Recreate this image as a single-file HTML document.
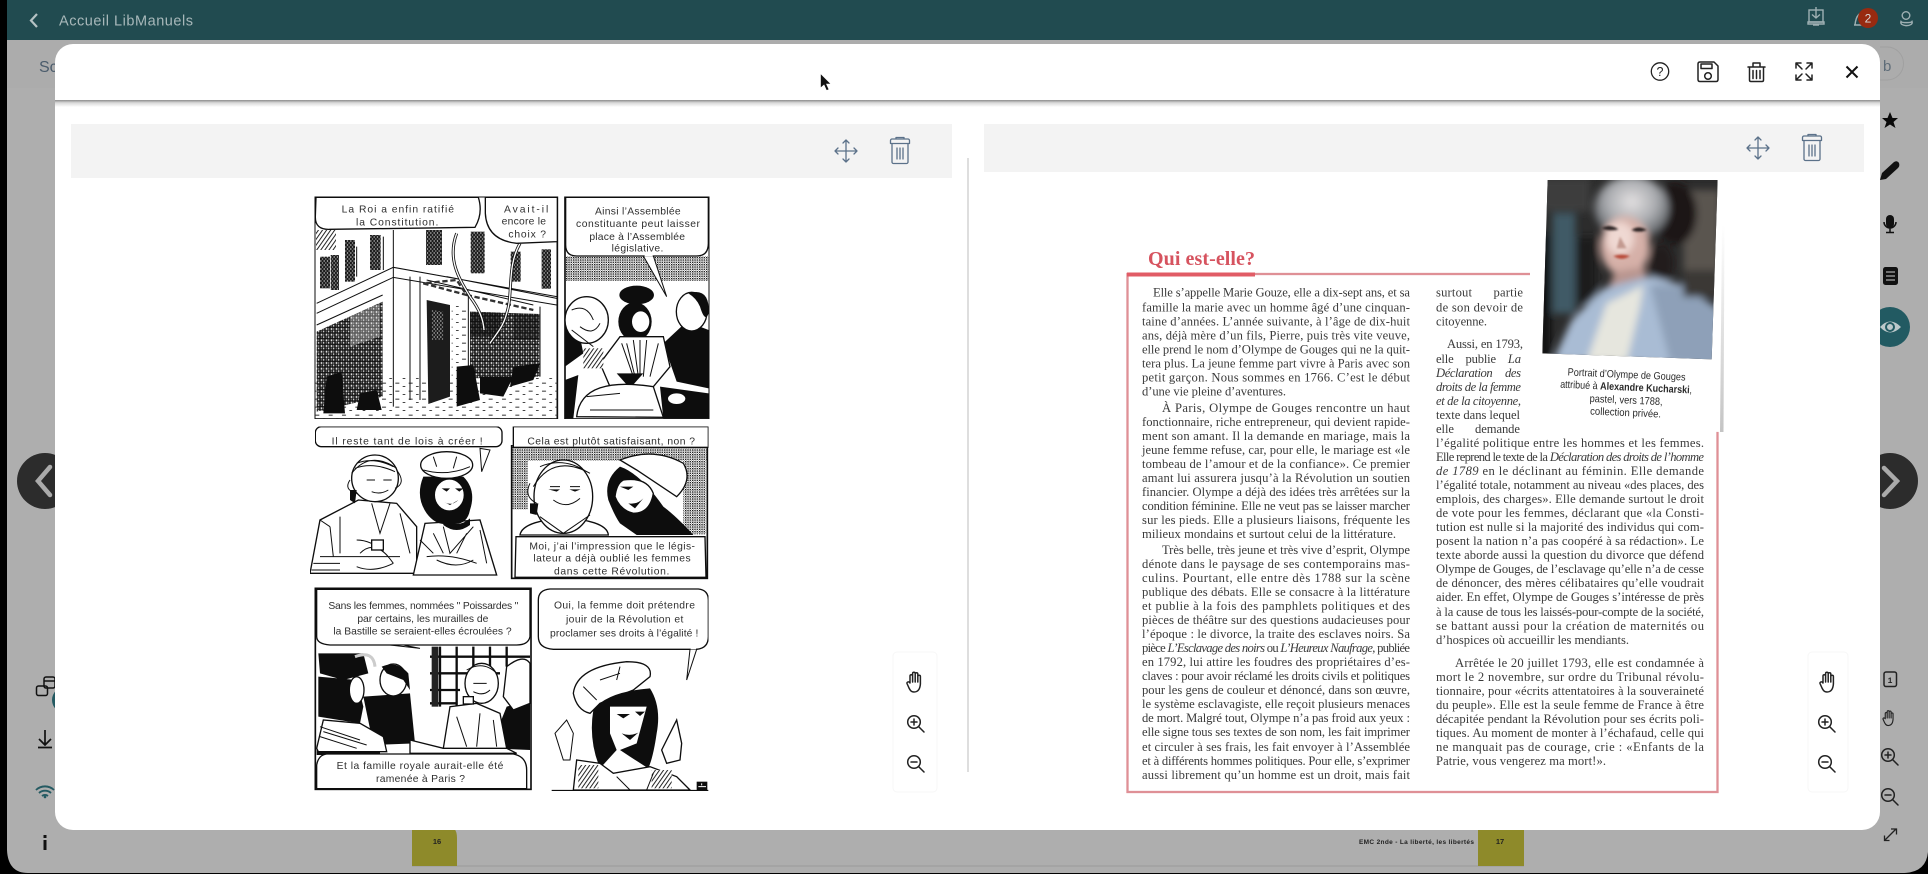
<!DOCTYPE html>
<html lang="fr"><head><meta charset="utf-8"><title>Accueil LibManuels</title>
<style>
html,body{margin:0;padding:0;background:#000;width:1928px;height:874px;overflow:hidden}
svg{display:block}
.c text{font-family:"Liberation Sans",sans-serif;font-size:31px;fill:#2e2e2e}
.p text{font-family:"Liberation Serif",serif;font-size:12.600px;fill:#3a3a3a}
.ic{fill:none;stroke:#222;stroke-width:1.5;stroke-linecap:round;stroke-linejoin:round}
.bl{fill:none;stroke:#5b7189;stroke-width:1.3;stroke-linecap:round;stroke-linejoin:round}
.k{fill:#111}
.o{fill:#fff;stroke:#111;stroke-width:4}
.l{fill:none;stroke:#111;stroke-width:3}
</style></head><body>
<svg width="1928" height="874" viewBox="0 0 1928 874" xmlns="http://www.w3.org/2000/svg">
<defs>
<filter id="bl" x="-20%" y="-20%" width="140%" height="140%"><feGaussianBlur stdDeviation="11"/></filter>
<filter id="b2" x="-5%" y="-5%" width="110%" height="110%"><feGaussianBlur stdDeviation="3"/></filter>
<filter id="cb" x="0" y="0" width="100%" height="100%"><feGaussianBlur stdDeviation="1.100"/></filter>
<clipPath id="pc"><polygon points="353,30 863,30 845,568 337,550"/></clipPath>
<pattern id="g" width="15" height="17" patternUnits="userSpaceOnUse"><rect width="15" height="17" fill="#111"/><rect x="2" y="2" width="5" height="6" fill="#ddd"/><rect x="9" y="2" width="4" height="6" fill="#777"/><rect x="2" y="10" width="5" height="5" fill="#666"/><rect x="9" y="10" width="4" height="5" fill="#ccc"/></pattern>
<pattern id="w" width="10" height="12" patternUnits="userSpaceOnUse"><rect width="10" height="12" fill="#1c1c1c"/><rect x="1" y="1" width="3" height="4" fill="#eee"/><rect x="6" y="7" width="3" height="4" fill="#bbb"/></pattern>
<pattern id="t" width="7" height="7" patternUnits="userSpaceOnUse"><rect width="7" height="7" fill="#fff"/><rect width="4" height="4" fill="#111"/><rect x="4" y="4" width="2" height="2" fill="#222"/></pattern>
<pattern id="h" width="10" height="10" patternUnits="userSpaceOnUse" patternTransform="rotate(35)"><rect width="10" height="10" fill="#fff"/><rect width="3" height="10" fill="#222"/></pattern>
<pattern id="d" width="40" height="24" patternUnits="userSpaceOnUse"><rect x="6" y="8" width="12" height="3" fill="#333"/><rect x="28" y="18" width="8" height="3" fill="#444"/></pattern>
<linearGradient id="sh" x1="0" y1="0" x2="0" y2="1"><stop offset="0" stop-color="#8c8c8c"/><stop offset=".4" stop-color="#d8d8d8"/><stop offset="1" stop-color="#fff"/></linearGradient>
<linearGradient id="ps" x1="0" y1="0" x2="0" y2="1"><stop offset="0" stop-color="#fff"/><stop offset="1" stop-color="#c4c4c4"/></linearGradient>
<radialGradient id="hr" cx=".5" cy=".4" r=".6"><stop offset="0" stop-color="#e4e1e2"/><stop offset=".55" stop-color="#aaacb0"/><stop offset="1" stop-color="#55595d"/></radialGradient>
<g id="hand"><path class="ic" stroke="#444" stroke-width="1.100" d="M-5 1V-6a1.3 1.3 0 0 1 2.6 0V-8.5a1.3 1.3 0 0 1 2.6 0V-8a1.3 1.3 0 0 1 2.6 0V-5.5a1.3 1.3 0 0 1 2.6 0V2C5 7 3 10-1 10C-4 10-5 8-6 6L-8 1.5C-8.5 0-6-1-5 1ZM-2.4-6V0M.2-8V0M2.8-5.5V0"/></g>
<g id="zp"><circle class="ic" cx="-2" cy="-2" r="6.3" stroke-width="1.8" stroke="#111"/><path class="ic" stroke-width="1.7" d="M3 3L8 8M-5-2H1M-2-5V1"/></g>
<g id="zm"><circle class="ic" cx="-2" cy="-2" r="6.3" stroke-width="1.8"/><path class="ic" stroke-width="1.7" d="M3 3L8 8M-5-2H1"/></g>
<g id="mv"><path class="bl" d="M0-11V11M-11 0H11M-3-8L0-11L3-8M-3 8L0 11L3 8M-8-3L-11 0L-8 3M8-3L11 0L8 3"/></g>
<g id="tr"><path class="bl" d="M-8-7.5V11a1.5 1.5 0 0 0 1.5 1.5H6.5A1.5 1.5 0 0 0 8 11V-7.5M-9.5-7.5H9.5V-10.500a1.500 1.500 0 0 0-1.500-1.500H-8A1.500 1.500 0 0 0-9.500-10.500ZM-4-12V-13.500H4V-12M-3-3V8M0-3V8M3-3V8"/></g>
</defs>

<!-- backdrop -->
<rect width="1928" height="874" fill="#000"/>
<path d="M7 0H1928V852Q1926 874 1900 873H28Q8 873 7 850Z" fill="#aeaeae"/>
<rect x="7" y="40" width="1921" height="48" fill="#acacac"/>
<rect x="7" y="0" width="1921" height="40" fill="#214b50"/>
<path d="M37 14L31 20.500L37 27" fill="none" stroke="#b5c2c4" stroke-width="2.200"/>
<text x="59" y="25.500" font-family="Liberation Sans,sans-serif" font-size="14.500" fill="#a8b8ba" textLength="134">Accueil LibManuels</text>
<text x="39" y="72" font-family="Liberation Sans,sans-serif" font-size="16" fill="#4b5c6c">Sc</text>
<path d="M1880 47H1887a16.500 16.500 0 0 1 0 33H1880" fill="none" stroke="#a0a0a0"/>
<text x="1883" y="71" font-family="Liberation Sans,sans-serif" font-size="15" fill="#5e6c78">b</text>
<!-- top right -->
<g fill="none" stroke="#9fb0b3" stroke-width="1.400"><rect x="1809" y="10" width="14" height="12"/><path d="M1816 7V18M1812 14.500L1816 18L1820 14.500"/><path d="M1808 22H1824V24H1808ZM1813 25H1819"/><path d="M1855 25C1856 15 1860 12 1864 14M1854 25H1866"/><circle cx="1906" cy="15.500" r="3.800"/><path d="M1901 21.500C1899 27 1914 27 1912 21.500C1911 23 1902 23 1901 21.500Z"/></g>
<circle cx="1868" cy="18" r="10" fill="#982a10"/>
<text x="1868" y="22.500" text-anchor="middle" font-family="Liberation Sans,sans-serif" font-size="12" fill="#d8d8d8">2</text>
<!-- left tools -->
<g fill="none" stroke="#111" stroke-width="1.500"><rect x="44" y="677" width="11" height="11" rx="2"/><path d="M44 681H55"/><rect x="36.500" y="686" width="11" height="9.500" rx="2"/></g>
<circle cx="65" cy="700" r="13" fill="#245a62"/>
<path d="M45 730V745M39 739L45 745L51 739M38 747.500H52" fill="none" stroke="#111" stroke-width="1.700"/>
<g fill="none" stroke="#245a62" stroke-width="1.900"><path d="M36 790A13 13 0 0 1 54 790"/><path d="M39 793A9 9 0 0 1 51 793"/><path d="M42 796A5 5 0 0 1 48 796"/></g><circle cx="45" cy="797" r="1.300" fill="#245a62"/>
<rect x="43.500" y="840" width="3" height="10" fill="#111"/><rect x="43.500" y="835" width="3" height="3" fill="#111"/>
<circle cx="45" cy="481" r="28" fill="#2c2c2c"/>
<path d="M50 467L38 481L50 495" fill="none" stroke="#aaa" stroke-width="4.500" stroke-linecap="round"/>
<!-- right tools -->
<path d="M1892 112L1894.500 118H1900L1895.500 122L1897.500 128L1892 124.500L1886.500 128L1888.500 122L1884 118H1889.500Z" fill="#0a0a0a" transform="translate(-2 0)"/>
<path d="M1880 180L1882 173L1894 162Q1897 160 1899 163Q1900 166 1898 168L1886 179Z" fill="#111"/>
<rect x="1886" y="215" width="8" height="13" rx="4" fill="#111"/><path d="M1884 222A6 6 0 0 0 1896 222M1890 228V232M1886 232.500H1894" fill="none" stroke="#111" stroke-width="1.500"/>
<rect x="1883" y="267" width="15" height="18" rx="2.500" fill="#111"/><path d="M1886 272H1895M1886 276H1895M1886 280H1895" stroke="#aaa" stroke-width="1.200"/>
<circle cx="1890" cy="327" r="20" fill="#225a62"/>
<path d="M1880 327Q1890 316 1901 327Q1890 338 1880 327Z" fill="#bcc8ca"/><circle cx="1890" cy="327" r="4" fill="none" stroke="#225a62" stroke-width="2"/>
<circle cx="1890" cy="481" r="28" fill="#2c2c2c"/>
<path d="M1884 468L1897 481L1884 495" fill="none" stroke="#aaa" stroke-width="4.500" stroke-linecap="round"/>
<rect x="1884" y="672" width="12.500" height="14.500" rx="2" fill="none" stroke="#222" stroke-width="1.500"/>
<text x="1890" y="683" text-anchor="middle" font-family="Liberation Mono,monospace" font-size="8" font-weight="bold" fill="#222">1</text>
<use href="#hand" transform="translate(1889 718) scale(.75)"/>
<use href="#zp" transform="translate(1890 757)"/>
<use href="#zm" transform="translate(1890 797)"/>
<path d="M1885 840L1896 829M1891 829H1896.500V834.500M1884.500 835.500V840.500H1889.500" fill="none" stroke="#222" stroke-width="1.300"/>
<!-- page tabs -->
<rect x="412" y="865" width="1112" height="2" fill="#a4a4a4"/>
<path d="M412 825H445Q457 825 457 838V866H412Z" fill="#8e8a2a"/>
<text x="437" y="844" text-anchor="middle" font-family="Liberation Sans,sans-serif" font-size="7.500" font-weight="bold" fill="#222">16</text>
<path d="M1478 825H1524V866H1478Z" fill="#8e8a2a"/>
<text x="1500" y="844" text-anchor="middle" font-family="Liberation Sans,sans-serif" font-size="7.500" font-weight="bold" fill="#222">17</text>
<text x="1359" y="844" font-family="Liberation Sans,sans-serif" font-size="6.500" font-weight="bold" fill="#222" textLength="115">EMC 2nde - La liberté, les libertés</text>

<!-- modal -->
<rect x="55" y="44" width="1825" height="786" rx="18" fill="#fff"/>
<rect x="55" y="100" width="1825" height="7" fill="url(#sh)"/>
<circle cx="1660" cy="71.500" r="8.700" fill="none" stroke="#222" stroke-width="1.300"/>
<text x="1660" y="76" text-anchor="middle" font-family="Liberation Sans,sans-serif" font-size="12.500" fill="#222">?</text>
<g class="ic" stroke="#222"><path d="M1700 62H1714L1718 66V79.500Q1718 81.500 1716 81.500H1700Q1698 81.500 1698 79.500V64Q1698 62 1700 62Z"/><rect x="1701" y="64" width="11" height="4.500"/><circle cx="1708" cy="76" r="3.300"/></g>
<g class="ic" stroke="#222"><path d="M1748 67H1765M1753 67V63H1760V67M1749.500 67V80Q1749.500 81.500 1751 81.500H1762Q1763.500 81.500 1763.500 80V67M1753 70.500V78.500M1756.500 70.500V78.500M1760 70.500V78.500"/></g>
<g class="ic" stroke="#111" stroke-width="1.500"><path d="M1796 63L1802 69M1796 68V63H1801M1812 63L1806 69M1807 63H1812V68M1796 80L1802 74M1796 75V80H1801M1812 80L1806 74M1807 80H1812V75"/></g>
<path d="M1846.500 66.500L1857.500 77.500M1857.500 66.500L1846.500 77.500" stroke="#111" stroke-width="2" fill="none"/>

<rect x="71" y="124" width="881" height="54" fill="#f3f3f3"/>
<rect x="984" y="124" width="880" height="48" fill="#f3f3f3"/>
<rect x="967.500" y="158" width="1" height="614" fill="#bdbdbd"/>
<use href="#mv" transform="translate(846 151)"/><use href="#tr" transform="translate(900 151)"/>
<use href="#mv" transform="translate(1758 148)"/><use href="#tr" transform="translate(1812 148)"/>
<rect x="1808" y="652" width="40" height="140" rx="4" fill="none" stroke="#f7f7f7"/>
<rect x="893" y="652" width="44" height="140" rx="4" fill="none" stroke="#f7f7f7"/>
<use href="#hand" transform="translate(1828 682)"/><use href="#zp" transform="translate(1827 724)"/><use href="#zm" transform="translate(1827 764)"/>
<use href="#hand" transform="translate(915 682)"/><use href="#zp" transform="translate(916 724)"/><use href="#zm" transform="translate(916 764)"/>

<!-- comic page -->
<g filter="url(#cb)" transform="translate(300 180) scale(.33333)" class="c">
<!-- panel 1 -->
<rect x="44" y="50" width="728" height="667" fill="#fff" stroke="#111" stroke-width="5"/>
<rect x="44" y="590" width="728" height="125" fill="url(#d)"/>
<rect x="48" y="150" width="60" height="60" fill="url(#h)"/>
<path class="k" d="M48 640L100 600L130 700H48Z" opacity=".0"/>
<g fill="url(#w)"><rect x="60" y="230" width="30" height="95"/><rect x="92" y="225" width="25" height="105"/><rect x="135" y="180" width="30" height="125"/><rect x="210" y="165" width="32" height="105"/><rect x="378" y="150" width="48" height="105"/><rect x="512" y="155" width="42" height="125"/><rect x="632" y="215" width="30" height="90"/><rect x="725" y="208" width="28" height="118"/></g>
<path class="l" d="M50 370L280 262L770 350M50 400L280 292L770 375M50 435L248 345M280 150V680M330 290V660M360 290V660M505 345V590M720 380V590M170 200L170 290M250 170V270M440 290L770 355M380 300L700 375"/>
<path d="M370 310L500 345L470 300ZM500 345L700 390" fill="none" stroke="#333" stroke-width="7" stroke-dasharray="16 8"/>
<polygon points="50,455 248,365 248,650 50,695" fill="url(#g)"/>
<polygon points="150,410 240,370 240,470 150,500" fill="#ddd" opacity=".35"/>
<polygon points="380,360 450,375 450,650 385,672" fill="#1c1c1c"/><polygon points="395,390 430,395 430,480 395,480" fill="url(#w)"/>
<rect x="455" y="375" width="45" height="260" fill="url(#d)"/>
<polygon points="510,395 718,402 718,590 510,595" fill="url(#g)"/>
<polygon points="510,395 600,398 600,470 510,470" fill="#111" opacity=".65"/>
<polygon points="640,400 718,402 718,480 640,480" fill="#111" opacity=".5"/>
<path class="k" d="M80 590L125 575L135 700L70 700ZM180 640L230 630L245 690L170 690ZM470 560L520 555L540 660L470 680ZM540 590H640L610 650L540 640ZM640 560L720 550L700 600L630 620Z"/>
<path d="M470 160C440 240 480 300 510 350C540 390 550 420 552 450" fill="none" stroke="#111" stroke-width="9"/><path d="M470 160C440 240 480 300 510 350C540 390 550 420 552 450" fill="none" stroke="#fff" stroke-width="4"/>
<path d="M660 190C620 260 640 340 620 400C610 440 590 460 570 490" fill="none" stroke="#111" stroke-width="9"/><path d="M660 190C620 260 640 340 620 400C610 440 590 460 570 490" fill="none" stroke="#fff" stroke-width="4"/>
<path class="o" d="M48 52H535Q550 100 525 142L90 148Q45 150 46 110Z"/>
<path class="o" d="M556 52H772V185L650 190Q560 180 556 100Z"/>
<text x="125" y="97" textLength="337">La Roi a enfin ratifié</text><text x="168" y="137" textLength="247">la Constitution.</text>
<text x="612" y="97" textLength="133">Avait-il</text><text x="605" y="133" textLength="133">encore le</text><text x="625" y="172" textLength="113">choix ?</text>
<!-- panel 2 -->
<rect x="795" y="50" width="433" height="667" fill="#fff" stroke="#111" stroke-width="5"/>
<rect x="798" y="228" width="428" height="75" fill="url(#t)"/>
<path class="k" d="M1090 490L1160 425L1226 450V625L1130 605ZM795 420L830 420L850 520L795 560ZM795 600L835 585L820 715H795ZM1080 620L1226 640V715H1090Z"/>
<ellipse class="o" cx="860" cy="420" rx="65" ry="70"/><path class="l" d="M815 390Q860 370 880 420M840 440Q880 470 900 430M815 450L880 500"/>
<ellipse class="o" cx="1175" cy="395" rx="46" ry="58"/>
<path class="k" d="M1165 340Q1230 320 1226 400Q1215 430 1200 380Q1190 355 1165 340Z"/>
<ellipse cx="1010" cy="345" rx="52" ry="28" class="k"/>
<ellipse cx="1005" cy="425" rx="50" ry="58" class="k"/>
<ellipse class="o" cx="1022" cy="425" rx="28" ry="33"/>
<path class="o" d="M960 470L1090 470L1110 560L1060 620H930L900 550Z"/>
<path class="l" d="M965 490L1000 590M1000 480L1015 590M1040 480L1030 590M1075 490L1050 590M980 490L1005 590M1020 480V590"/>
<path class="k" d="M950 580L1030 580L990 625Z"/>
<path class="o" d="M830 710C840 620 930 600 1060 620L1090 712Z"/>
<path class="l" d="M870 690L1060 690M860 650L960 640"/>
<rect x="850" y="505" width="60" height="60" fill="url(#h)"/>
<ellipse class="o" cx="1130" cy="656" rx="28" ry="18"/>
<path class="o" d="M797 52H1225V190Q1225 228 1190 228H830Q797 228 797 195Z"/>
<path d="M1030 228L1100 350L1060 228Z" fill="#fff" stroke="#111" stroke-width="3"/>
<path d="M1034 226H1058" stroke="#fff" stroke-width="6"/>
<text x="885" y="103" textLength="257">Ainsi l’Assemblée</text><text x="828" y="141" textLength="372">constituante peut laisser</text><text x="868" y="180" textLength="287">place à l’Assemblée</text><text x="935" y="215" textLength="155">législative.</text>
</g>
<g filter="url(#cb)" transform="translate(300 440) scale(.33333)" class="c">
<path d="M540 25L545 95L570 30Z" fill="#fff" stroke="#111" stroke-width="3"/>
<!-- man -->
<path class="o" d="M30 400L60 240L175 180L290 190L350 260L350 400Z"/>
<ellipse class="o" cx="225" cy="115" rx="70" ry="70"/>
<path class="l" d="M155 100Q210 30 290 85M150 120Q130 150 170 160M290 90Q320 130 285 145M200 120H225M250 120H275M215 155Q240 165 265 150M215 190L240 280L270 190M60 350H300M90 260L100 350M170 300Q230 300 280 370M60 240L90 260M170 70Q220 50 280 80M165 85Q220 65 285 95M40 370H120M35 390H120M120 230V340M300 220L330 340M180 340Q220 300 265 350M170 380Q220 400 280 370"/>
<rect x="215" y="300" width="35" height="30" class="o"/>
<path class="k" d="M150 150L170 150L165 190L150 180Z"/>
<!-- woman -->
<path class="o" d="M340 405L375 250L540 240L590 405Z"/>
<path class="k" d="M370 110Q345 170 380 220Q410 260 450 250Q500 260 510 210Q530 150 490 110Z"/>
<ellipse class="o" cx="440" cy="75" rx="78" ry="40"/>
<path class="l" d="M370 90Q440 110 510 80M400 50L410 80M470 50L460 85"/>
<ellipse class="o" cx="448" cy="165" rx="45" ry="48"/>
<path class="k" d="M425 145H450L440 155ZM465 145H490L478 155ZM430 185Q455 200 475 180L450 195Z"/>
<path class="k" d="M430 230Q470 270 510 235L510 255Q470 285 430 255Z"/>
<path class="l" d="M430 260L450 340L520 260M380 350Q450 340 530 370M360 300L400 340M540 270L560 370M400 280L430 340M500 280L470 340M410 360Q470 390 520 360"/>
<!-- right panel -->
<rect x="635" y="15" width="587" height="400" fill="#fff" stroke="#111" stroke-width="5"/>
<rect x="638" y="18" width="581" height="45" fill="url(#t)"/>
<rect x="1150" y="18" width="68" height="265" fill="url(#t)"/>
<rect x="638" y="18" width="45" height="190" fill="url(#t)"/>
<path class="o" d="M660 285C670 220 920 220 925 285Z"/>
<ellipse class="o" cx="790" cy="170" rx="88" ry="110"/>
<path class="l" d="M700 140Q760 40 870 100M690 130Q670 170 710 190M750 140H780M810 140H840M760 180Q800 210 840 175M720 230L790 280L870 225M720 80Q790 50 860 95"/>
<path class="k" d="M690 190L715 190L710 225L690 220ZM745 148H780L770 155ZM808 148H842L825 155Z"/>
<path class="o" d="M960 60Q1060 20 1150 70Q1180 120 1130 170L1010 90Z"/>
<path class="k" d="M960 80Q910 120 925 180Q945 230 960 250L1010 285L1180 285Q1130 230 1090 200Q1020 100 960 80Z"/>
<path class="o" d="M970 120Q1040 110 1060 160Q1050 220 1000 220Q960 210 945 170Q950 130 970 120Z"/>
<path class="k" d="M960 140H1000L985 150ZM985 190Q1010 195 1030 175L1005 205Z"/>
<path class="o" d="M648 290H1215L1218 412H645Z" stroke-width="3"/>
<text x="688" y="328" textLength="497">Moi, j’ai l’impression que le légis-</text><text x="700" y="365" textLength="472">lateur a déjà oublié les femmes</text><text x="762" y="403" textLength="346">dans cette Révolution.</text>
<!-- row 3 left -->
<rect x="46" y="445" width="647" height="603" fill="#fff" stroke="#111" stroke-width="5"/>
<g stroke="#111" stroke-width="7"><path d="M420 620V800M470 620V800M520 620V780M570 620V700M620 620V680M390 650H690M390 700H600M390 750H480M390 790H470"/></g>
<rect x="395" y="620" width="20" height="180" fill="#222"/>
<path class="k" d="M55 640H190L205 700L130 720L60 700ZM55 710L170 720L190 800L180 850L55 830ZM190 770L330 760L345 910L220 915ZM620 800L690 780V930L570 925ZM50 920H240V945H50Z"/>
<path d="M165 650Q220 630 225 680" fill="none" stroke="#ccc" stroke-width="9"/>
<ellipse class="o" cx="280" cy="720" rx="40" ry="48"/><path class="k" d="M245 680Q290 660 325 700L330 750L310 720L260 700Z"/>
<ellipse class="o" cx="170" cy="750" rx="22" ry="40"/>
<path class="o" d="M50 925L70 840L180 850L250 890L260 935L55 935Z"/>
<path class="l" d="M60 860L180 900M60 890L170 925M240 840L310 850M70 875L200 915"/>
<path class="o" d="M330 900L430 925L620 925L650 940H330Z"/>
<path class="o" d="M430 925L450 800L530 790L600 820L620 925Z"/>
<path class="l" d="M470 830L500 920M540 820L530 920M580 840L590 920"/>
<ellipse class="o" cx="545" cy="730" rx="50" ry="60"/>
<path class="l" d="M500 690Q550 660 590 700M520 730L560 730M520 755Q550 770 570 750"/>
<path class="o" d="M620 680Q670 640 690 670V790L640 810L610 770Z"/>
<rect x="490" y="770" width="30" height="22" class="o"/>
<path class="o" d="M50 448H690V590Q685 615 650 615L90 615Q50 612 50 590Z"/>
<path d="M270 615L360 625L310 615Z" fill="#fff" stroke="#111" stroke-width="3"/>
<path class="o" d="M80 942H640Q680 950 680 990V1046H50V975Q55 945 80 942Z"/>
<text x="85" y="507" textLength="570">Sans les femmes, nommées " Poissardes "</text><text x="172" y="546" textLength="393">par certains, les murailles de</text><text x="100" y="584" textLength="535">la Bastille se seraient-elles écroulées ?</text>
<text x="110" y="987" textLength="500">Et la famille royale aurait-elle été</text><text x="228" y="1026" textLength="267">ramenée à Paris ?</text>
<!-- row 3 right -->
<path class="o" d="M750 447H1195Q1225 450 1225 480V590Q1225 625 1190 628H760Q715 625 715 590V480Q715 450 750 447Z"/>
<path d="M1170 628L1160 720L1190 628Z" fill="#fff" stroke="#111" stroke-width="3"/>
<path d="M1172 625H1188" stroke="#fff" stroke-width="6"/>
<text x="762" y="506" textLength="423">Oui, la femme doit prétendre</text><text x="798" y="548" textLength="352">jouir de la Révolution et</text><text x="750" y="590" textLength="445">proclamer ses droits à l’égalité !</text>
<path class="o" d="M820 760Q830 680 980 665Q1060 665 1050 710L1000 750L900 790L870 820Q830 810 820 760Z"/>
<path class="l" d="M900 720L960 700M850 740L890 780M960 680L950 720"/>
<path class="k" d="M880 810Q920 755 1050 745Q1085 800 1070 880Q1060 950 1045 985L990 950L960 930L1010 910L1040 800L930 800L930 880L950 930L900 985Q865 900 880 810Z"/>
<path class="k" d="M950 822H990L970 835ZM1005 815H1035L1020 828ZM965 880Q990 890 1015 878L990 900Z"/>
<path class="o" d="M820 1050L830 960L900 970L940 1000L1050 980L1130 1010L1170 1050Z"/>
<rect x="835" y="975" width="60" height="70" fill="url(#h)"/>
<rect x="1055" y="990" width="60" height="55" fill="url(#h)"/>
<path class="l" d="M950 1010L990 1050M1060 1000L1040 1050M765 880L800 840L820 880L810 960L790 960Z"/>
<path class="o" d="M1085 930L1130 840L1145 910L1140 960L1100 970Z"/>
<path d="M755 1052H1225" stroke="#111" stroke-width="5"/>
<rect x="1190" y="1025" width="32" height="27" class="k"/><path d="M1195 1040H1218M1205 1030V1036" stroke="#fff" stroke-width="3"/>
</g>
<!-- row 2 bubbles, above the lower group -->
<g filter="url(#cb)" transform="translate(300 180) scale(.33333)" class="c">
<rect x="46" y="740" width="560" height="60" rx="18" class="o"/>
<rect x="640" y="740" width="585" height="62" fill="#fff" stroke="#111" stroke-width="4"/>
<text x="95" y="794" textLength="453">Il reste tant de lois à créer !</text>
<text x="682" y="793" textLength="503">Cela est plutôt satisfaisant, non ?</text>
</g>

<!-- text page -->
<rect x="1127.500" y="274" width="590" height="518" fill="#fff" stroke="#df9096" stroke-width="2.300"/>
<rect x="1127" y="272.500" width="128" height="4" fill="#e15c66"/>
<text x="1148" y="265" font-family="Liberation Serif,serif" font-size="20" font-weight="bold" fill="#d6535f" textLength="107">Qui est-elle?</text>
<g class="p">
<text x="1153" y="296.500" textLength="257">Elle s’appelle Marie Gouze, elle a dix-sept ans, et sa</text>
<text x="1142" y="311.500" textLength="268">famille la marie avec un homme âgé d’une cinquan-</text>
<text x="1142" y="325.500" textLength="268">taine d’années. L’année suivante, à l’âge de dix-huit</text>
<text x="1142" y="339.500" textLength="268">ans, déjà mère d’un fils, Pierre, puis très vite veuve,</text>
<text x="1142" y="353.500" textLength="268">elle prend le nom d’Olympe de Gouges qui ne la quit-</text>
<text x="1142" y="367.500" textLength="268">tera plus. La jeune femme part vivre à Paris avec son</text>
<text x="1142" y="381.500" textLength="268">petit garçon. Nous sommes en 1766. C’est le début</text>
<text x="1142" y="395.500" textLength="144">d’une vie pleine d’aventures.</text>
<text x="1162" y="412" textLength="248">À Paris, Olympe de Gouges rencontre un haut</text>
<text x="1142" y="426" textLength="268">fonctionnaire, riche entrepreneur, qui devient rapide-</text>
<text x="1142" y="440" textLength="268">ment son amant. Il la demande en mariage, mais la</text>
<text x="1142" y="454" textLength="268">jeune femme refuse, car, pour elle, le mariage est «le</text>
<text x="1142" y="468" textLength="268">tombeau de l’amour et de la confiance». Ce premier</text>
<text x="1142" y="482" textLength="268">amant lui assurera jusqu’à la Révolution un soutien</text>
<text x="1142" y="496" textLength="268">financier. Olympe a déjà des idées très arrêtées sur la</text>
<text x="1142" y="510" textLength="268">condition féminine. Elle ne veut pas se laisser marcher</text>
<text x="1142" y="524" textLength="268">sur les pieds. Elle a plusieurs liaisons, fréquente les</text>
<text x="1142" y="538" textLength="254">milieux mondains et surtout celui de la littérature.</text>
<text x="1162" y="554" textLength="248">Très belle, très jeune et très vive d’esprit, Olympe</text>
<text x="1142" y="568" textLength="268">dénote dans le paysage de ses contemporains mas-</text>
<text x="1142" y="582" textLength="268">culins. Pourtant, elle entre dès 1788 sur la scène</text>
<text x="1142" y="596" textLength="268">publique des débats. Elle se consacre à la littérature</text>
<text x="1142" y="610" textLength="268">et publie à la fois des pamphlets politiques et des</text>
<text x="1142" y="624" textLength="268">pièces de théâtre sur des questions audacieuses pour</text>
<text x="1142" y="638" textLength="268">l’époque : le divorce, la  traite des esclaves noirs. Sa</text>
<text x="1142" y="652" textLength="268">pièce <tspan font-style="italic">L’Esclavage des noirs</tspan> ou <tspan font-style="italic">L’Heureux Naufrage</tspan>, publiée</text>
<text x="1142" y="666" textLength="268">en 1792, lui attire les foudres des propriétaires d’es-</text>
<text x="1142" y="680" textLength="268">claves : pour avoir réclamé les droits civils et politiques</text>
<text x="1142" y="694" textLength="268">pour les gens de couleur et dénoncé, dans son œuvre,</text>
<text x="1142" y="708" textLength="268">le système esclavagiste, elle reçoit plusieurs menaces</text>
<text x="1142" y="722" textLength="268">de mort. Malgré tout, Olympe n’a pas froid aux yeux :</text>
<text x="1142" y="736" textLength="268">elle signe tous ses textes de son nom, les fait imprimer</text>
<text x="1142" y="751" textLength="268">et circuler à ses frais, les fait envoyer à l’Assemblée</text>
<text x="1142" y="765" textLength="268">et à différents hommes politiques. Pour elle, s’exprimer</text>
<text x="1142" y="779" textLength="268">aussi librement qu’un homme est un droit, mais fait</text>

<text x="1436" y="296.500" textLength="87" word-spacing="18">surtout partie</text>
<text x="1436" y="311.500" textLength="87">de son devoir de</text>
<text x="1436" y="325.500" textLength="51">citoyenne.</text>
<text x="1447" y="348" textLength="76">Aussi, en 1793,</text>
<text x="1436" y="363" textLength="85" word-spacing="9">elle publie <tspan font-style="italic">La</tspan></text>
<text x="1436" y="377" font-style="italic" textLength="85" word-spacing="10">Déclaration des</text>
<text x="1436" y="391" font-style="italic" textLength="85">droits de la femme</text>
<text x="1436" y="405" textLength="85"><tspan font-style="italic">et de la citoyenne</tspan>,</text>
<text x="1436" y="419" textLength="84">texte dans lequel</text>
<text x="1436" y="433" textLength="84" word-spacing="18">elle demande</text>
<text x="1436" y="447" textLength="268">l’égalité politique entre les hommes et les femmes.</text>
<text x="1436" y="461" textLength="268">Elle reprend le texte de la <tspan font-style="italic">Déclaration des droits de l’homme</tspan></text>
<text x="1436" y="475" textLength="268"><tspan font-style="italic">de 1789</tspan> en le déclinant au féminin. Elle demande</text>
<text x="1436" y="489" textLength="268">l’égalité totale, notamment au niveau «des places, des</text>
<text x="1436" y="503" textLength="268">emplois, des charges». Elle demande surtout le droit</text>
<text x="1436" y="517" textLength="268">de vote pour les femmes, déclarant que «la Consti-</text>
<text x="1436" y="531" textLength="268">tution est nulle si la majorité des individus qui com-</text>
<text x="1436" y="545" textLength="268">posent la nation n’a pas coopéré à sa rédaction». Le</text>
<text x="1436" y="559" textLength="268">texte aborde aussi la question du divorce que défend</text>
<text x="1436" y="573" textLength="268">Olympe de Gouges, de l’esclavage qu’elle n’a de cesse</text>
<text x="1436" y="587" textLength="268">de dénoncer, des mères célibataires qu’elle voudrait</text>
<text x="1436" y="601" textLength="268">aider. En effet, Olympe de Gouges s’intéresse de près</text>
<text x="1436" y="616" textLength="268">à la cause de tous les laissés-pour-compte de la société,</text>
<text x="1436" y="630" textLength="268">se battant aussi pour la création de maternités ou</text>
<text x="1436" y="644" textLength="193">d’hospices où accueillir les mendiants.</text>
<text x="1455" y="667" textLength="249">Arrêtée le 20 juillet 1793, elle est condamnée à</text>
<text x="1436" y="681" textLength="268">mort le 2 novembre, sur ordre du Tribunal révolu-</text>
<text x="1436" y="695" textLength="268">tionnaire, pour «écrits attentatoires à la souveraineté</text>
<text x="1436" y="709" textLength="268">du peuple». Elle est la seule femme de France à être</text>
<text x="1436" y="723" textLength="268">décapitée pendant la Révolution pour ses écrits poli-</text>
<text x="1436" y="737" textLength="268">tiques. Au moment de monter à l’échafaud, celle qui</text>
<text x="1436" y="751" textLength="268">ne manquait pas de courage, crie : «Enfants de la</text>
<text x="1436" y="765" textLength="170">Patrie, vous vengerez ma mort!».</text>
</g>

<!-- portrait polaroid -->
<path d="M1530 176H1720L1722 432L1530 428Z" fill="#fff"/>
<path d="M1722 225L1724.500 225L1723.500 432H1720Z" fill="url(#ps)"/>
<g transform="translate(1430 170) scale(.33333)">
<g clip-path="url(#pc)">
<rect x="330" y="25" width="540" height="550" fill="#2c2c2c"/>
<g filter="url(#bl)">
<rect x="330" y="25" width="150" height="100" fill="#3c3c3c"/>
<rect x="760" y="60" width="110" height="300" fill="#5a5550"/>
<rect x="368" y="130" width="68" height="300" fill="#3f5a66"/>
<rect x="330" y="190" width="30" height="380" fill="#0a0a0a"/>
<rect x="440" y="200" width="60" height="200" fill="#1c1c1c"/>
<ellipse cx="735" cy="130" rx="65" ry="95" fill="#1a1818"/>
<ellipse cx="695" cy="280" rx="38" ry="60" fill="#211e1e"/>
<ellipse cx="605" cy="115" rx="112" ry="98" fill="url(#hr)"/>
<ellipse cx="585" cy="228" rx="74" ry="90" fill="#d6b0a8"/>
<ellipse cx="570" cy="205" rx="42" ry="50" fill="#efd8d2"/>
<polygon points="555,305 645,290 650,335 530,365" fill="#b8948e"/>
<polygon points="370,570 425,450 520,355 660,318 760,345 870,420 870,590" fill="#a9bcd4"/>
<polygon points="660,345 760,345 870,420 870,590 720,575" fill="#8ea0b8"/>
<polygon points="470,575 530,400 640,345 630,410 590,575" fill="#e6e6de"/>
<rect x="760" y="300" width="110" height="80" fill="#3a3835"/>
</g>
<g filter="url(#b2)">
<path d="M515 175Q540 160 565 178Q540 185 515 175ZM605 180Q625 165 650 180Q625 190 605 180Z" fill="#2a2020"/>
<path d="M550 258Q575 250 600 258Q575 275 550 258Z" fill="#b84a38"/>
<path d="M570 200L560 235H590Z" fill="#c39a90"/>
</g>
</g>
</g>
<g font-family="Liberation Sans,sans-serif" font-size="10.500" fill="#2a2a2a" text-anchor="middle">
<text transform="translate(1626.500 378) rotate(2.500)" textLength="118" lengthAdjust="spacingAndGlyphs">Portrait d’Olympe de Gouges</text>
<text transform="translate(1626 390.500) rotate(2.500)" textLength="132" lengthAdjust="spacingAndGlyphs">attribué à <tspan font-weight="bold">Alexandre Kucharski</tspan>,</text>
<text transform="translate(1626 403.500) rotate(2.500)" textLength="73" lengthAdjust="spacingAndGlyphs">pastel, vers 1788,</text>
<text transform="translate(1625.500 416) rotate(2.500)" textLength="71" lengthAdjust="spacingAndGlyphs">collection privée.</text>
</g>
<!-- cursor -->
<path d="M820.500 73.500V88L824 85L826.500 90.500L829 89.500L826.500 84H831Z" fill="#111" stroke="#fff" stroke-width=".6"/>
</svg>
</body></html>
